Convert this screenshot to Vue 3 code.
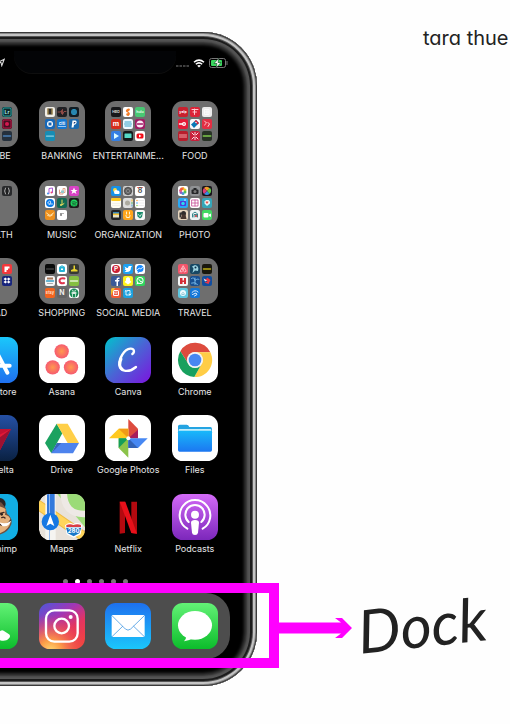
<script setup>
const c = (x, y, r, f) => `<circle cx="${x}" cy="${y}" r="${r}" fill="${f}"/>`
const p = (d, f) => `<path d="${d}" fill="${f}"/>`
const s = (d, col, w = 2) => `<path d="${d}" stroke="${col}" stroke-width="${w}" fill="none" stroke-linecap="round" stroke-linejoin="round"/>`
const r = (x, y, w, h, f, rx = 0) => `<rect x="${x}" y="${y}" width="${w}" height="${h}" rx="${rx}" fill="${f}"/>`
const t = (text, size, f) => `<text x="10" y="${10 + size * 0.35}" font-size="${size}" fill="${f}" text-anchor="middle" font-family="Inter, sans-serif" font-weight="700">${text}</text>`
const m = (bg, art = '') => r(0, 0, 20, 20, bg, 4) + art
const none = m('none')

const folders = [
  { name: 'ADOBE', minis: [
    none, none, m('#12343c', r(1, 1, 18, 18, '#27a5a0', 4) + r(3, 3, 14, 14, '#10292d', 1) + t('Lr', 10, '#a5eee9')),
    none, none, m('#541022', r(1, 1, 18, 18, '#b71848', 4) + r(3, 3, 14, 14, '#470d20', 1) + c(10, 10, 4, '#d5184f')),
    none, none, m('#25303c', s('M3 10H17', '#4a7fb5', 3))
  ] },
  { name: 'BANKING', minis: [
    m('#f1eee7', r(5, 3, 10, 12, '#33302d') + r(5, 3, 2, 12, '#c6a355') + r(13, 3, 2, 12, '#c6a355')),
    m('#202024', s('M2 10H7L9 7V13M11 5V15L14 9H18', '#b25750', 1.5)),
    m('#101b22', c(10, 10, 6, '#2e9cca') + s('M5 8H15M5 12H15', '#14445e', 1)),
    m('#1768b7', c(10, 10, 6, '#fff') + r(7, 7, 6, 6, '#1768b7')),
    m('#1477cf', t('citi', 8, '#fff') + s('M3 15H17', '#cfe6ff', 1.5)),
    m('#1b69ad', p('M7 3H13Q17 5 14 10L10 12L9 17H5Z', '#fff') + p('M10 6H13Q13 10 9 9Z', '#1c3c78')),
    m('#178db4', s('M3 10H17', '#8fd0e0', 2.5)), none, none
  ] },
  { name: 'ENTERTAINME...', minis: [
    m('#17181a', t('HBO', 7, '#ddd')), m('#fff', p('M7 5Q13 1 14 6L10 9Q17 13 11 18Q5 17 7 13L11 12Q3 9 7 5Z', '#f47a23')), m('#48c773', t('hulu', 7, '#e8ffe9')),
    m('#d52d1c', t('m', 14, '#fff')), m('#eef9ff', s('M4 6H16M3 10H17M4 14H16', '#36a2c7')), m('#a21b66', c(10, 10, 7, '#f9e9f4') + s('M5 10H15', '#a21b66', 3)),
    m('#347fe3', p('M6 4L16 10L6 16Z', '#dcfcff')), m('#15191b', r(3, 5, 14, 9, '#55d9c7', 1)), m('#fff', r(3, 5, 14, 10, '#f20c17', 3) + p('M8 7L13 10L8 13Z', '#fff'))
  ] },
  { name: 'FOOD', minis: [
    m('#c8202e', t('yelp', 7, '#fff')), m('#db2438', s('M4 5H16M6 10H13M9 4V15', '#ffc7cf')), m('#ececec', s('M6 5H14V15H6ZM6 10H14M10 5V15', '#fafafa')),
    m('#e51937', s('M3 10H11', '#fff', 3) + c(12, 10, 4, '#fff') + c(12, 10, 1.5, '#e51937')), m('#f8f8f8', p('M2 11L12 2L18 8L8 18Z', '#0878b5') + p('M9 5L12 2L18 8L15 11Z', '#d91e35') + c(12, 7, 1.5, '#fff')), m('#e42e43', s('M5 4L9 8L5 12M12 7L15 10L12 15', '#ffd4d9')),
    m('#b81f2d', s('M3 8H17M3 12H17', '#f4a3a8')), m('#c9203b', s('M4 4L16 16M16 4L4 16M10 3V17', '#ffe0e6') + c(10, 10, 2, '#c9203b')), m('#273225', s('M3 10H17', '#69a342', 4))
  ] },
  { name: 'HEALTH', minis: [none, none, m('#28292b', s('M7 4Q3 10 7 16M13 4Q17 10 13 16', '#aaa', 2) + s('M9 5V15H11V5Z', '#171717', 1)), none, none, none, none, none, none] },
  { name: 'MUSIC', minis: [
    m('#fff', s('M8 15V5L15 4V13', '#ad5bd6', 2) + c(6, 15, 2, '#3e91e8') + c(13, 13, 2, '#f04773')), m('#fff', s('M5 8V16H12V5H16V13H7', '#e3a188') + r(8, 9, 6, 5, '#91cbd0')), m('#d943c6', p('M10 3L12 8H17L13 11L15 16L10 13L5 16L7 11L3 8H8Z', '#fff')),
    m('#fff', c(10, 10, 8, '#087aea') + s('M6 9C8 4 13 6 11 10S7 14 6 10M9 12H15', '#fff', 1.5)), m('#116953', s('M10 4V14L14 11', '#eadc55', 2) + c(8, 14, 2, '#f1df64')), m('#191b1a', c(10, 10, 7, '#1ed760') + s('M6 8Q11 6 15 9M7 11Q11 9 14 12M7 14Q10 12 13 14', '#17331f', 1.3)),
    m('#ed901e', s('M3 6L10 11L17 6M5 11Q10 15 15 10', '#ffe1a8')), m('#fff', s('M8 7V11', '#222', 2) + c(12, 7, 1, '#333')), none
  ] },
  { name: 'ORGANIZATION', minis: [
    m('#1792e8', c(8, 8, 4, '#ffd93b') + c(10, 12, 4, '#fff') + c(14, 12, 3, '#fff') + r(7, 12, 10, 4, '#fff', 2)), m('#d0d0d0', c(10, 10, 8, '#555') + c(10, 10, 5, '#999') + s('M10 2V18M2 10H18M4 4L16 16M16 4L4 16', '#444', 1)), m('#fff', s('M5 3H15', '#f44335', 1.5) + t('8', 14, '#555')),
    m('#fffdf1', r(0, 0, 20, 6, '#ffca1e', 3) + s('M3 11H17M3 15H17', '#ddd', .7)), m('#ddd', c(9, 10, 5, '#acaaa0') + r(17, 3, 2, 4, '#ffba18') + r(17, 8, 2, 4, '#5ab96b') + r(17, 13, 2, 4, '#419bd5')), m('#fff', c(4, 5, 1.3, '#ff8c16') + c(4, 10, 1.3, '#198ef0') + c(4, 15, 1.3, '#78cd35') + s('M7 5H18M7 10H18M7 15H18', '#ddd', 1)),
    m('#242426', r(4, 4, 12, 4, '#3c88b8') + r(4, 7, 12, 3, '#fcc32e') + r(4, 10, 12, 5, '#e7e1c3')), m('#ffa51b', s('M7 4V8M13 4V8M6 11L7 15H13L14 11', '#fff3cf')), m('#f8f8f8', p('M4 4H16L14 14L10 17L5 13Z', '#158969') + s('M7 9L10 13L13 8', '#fff', 1.5))
  ] },
  { name: 'PHOTO', minis: [
    m('#fff', c(10, 5, 3, '#ff9c25') + c(14, 8, 3, '#dfcf24') + c(14, 12, 3, '#55bf54') + c(10, 15, 3, '#43a1d4') + c(6, 13, 3, '#8e5fc6') + c(5, 9, 3, '#df578c') + c(7, 6, 3, '#f05b3e')), m('#909294', r(3, 7, 14, 9, '#252628', 2) + r(7, 4, 6, 4, '#252628') + c(10, 11, 3, '#777')), m('#17131a', p('M10 10L4 4Q10 -1 16 5Z', '#f19c28') + p('M10 10L16 4Q21 10 15 16Z', '#61c94d') + p('M10 10L15 16Q10 20 4 16Z', '#368ce6') + p('M10 10L4 16Q-1 10 4 4Z', '#dc3d78')),
    m('#29a9f5', r(4, 6, 12, 10, '#5535d8', 2) + c(10, 11, 3.5, '#2ad9ef') + c(14, 4, 1.5, '#fff')), m('#fff', s('M4 4H16V16H4ZM10 4V10H16M4 10H10V16', '#c34391', 1.5)), m('#35a6b9', p('M5 7L8 4H13L16 7V11L10 16L5 11Z', '#e8f6f7') + p('M10 12L7 8Q9 5 10 8Q12 5 13 8Z', '#ec4d46')),
    m('#e5d4bc', c(11, 7, 5, '#302c2b') + p('M5 18L8 9H15L17 18Z', '#47362e') + r(3, 5, 3, 10, '#343332')), m('#eef4f6', s('M5 14V8Q10 1 15 8V14M8 14V9H13', '#35858c') + c(12, 12, 2.5, '#c65c62')), m('#42d963', r(3, 6, 10, 9, '#fff', 2) + p('M14 9L18 7V14L14 12Z', '#fff'))
  ] },
  { name: 'READ', minis: [none, none, m('#f2383c', p('M5 5H15V9H12V12H9V16H5Z', '#fff')), none, none, m('#18257c', p('M3 6L7 3L10 6L13 3L17 6L13 9L17 12L13 15L10 12L7 15L3 12L7 9Z', '#fff') + p('M10 6L13 9L10 12L7 9Z', '#18257c')), none, none, none] },
  { name: 'SHOPPING', minis: [
    m('#090a0a', s('M3 10H17', '#777', 1.5)), m('#fff', r(4, 5, 12, 11, '#26b4d6', 2) + s('M7 8V5Q10 2 13 5V8', '#26b4d6') + r(8, 9, 4, 3, '#fff')), m('#373932', p('M9 3H12V10L17 12V15H4V12L9 10Z', '#ead52d')),
    m('#f5f5f5', r(4, 3, 12, 4, '#aa785a') + s('M3 10H17', '#369fc6', 3) + s('M5 15H15', '#aaa')), m('#fff', s('M15 5Q5 3 5 10Q6 16 14 14', '#df344c', 4)), m('#85bf41', s('M3 10H17', '#e3f4cf', 3)),
    m('#f2641f', t('Etsy', 8, '#ffd9c2')), m('#646464', t('N', 14, '#eee')), m('#fff', c(10, 10, 9, '#188b55') + s('M6 4L10 7L14 4M5 10H15M7 8V17M13 8V17', '#eaf7ef', 1.5) + c(10, 10, 2, '#fff'))
  ] },
  { name: 'SOCIAL MEDIA', minis: [
    m('#fff', c(10, 10, 8, '#cb2134') + t('P', 13, '#fff')), m('#1da1f2', p('M3 5Q7 8 10 8Q10 3 14 4L18 4L16 7Q16 16 7 16H3L7 13L3 11L5 10Z', '#fff')), m('#fff', c(10, 9, 7, '#178aff') + p('M6 14L5 19L10 15Z', '#178aff') + s('M5 11L9 8L11 10L15 7', '#fff', 1.8)),
    m('#395998', p('M11 20V11H8V8H11V6Q11 2 17 3V6H14V8H17L16 11H14V20Z', '#fff')), m('#fff21b', p('M6 5Q10 0 14 5V9L17 12L14 14L10 17L6 14L3 12L6 9Z', '#fff')), m('#31d45c', c(10, 9, 7, '#fff') + p('M4 12L3 17L8 15Z', '#fff') + c(10, 9, 5, '#31d45c') + s('M8 7L12 12L13 11', '#fff', 2)),
    m('#f25934', p('M0 4Q0 0 4 0H8L0 15Z', '#f7bc30') + r(4, 4, 12, 12, '#fff', 3) + r(6, 6, 8, 8, '#ee5b48', 1) + s('M8 8H12V11H8Z', '#fff', 1)), m('#1ca1df', s('M6 5V14H13M4 7L6 5L8 7M9 5H14V14M12 12L14 14L16 12', '#fff', 1.7)), none
  ] },
  { name: 'TRAVEL', minis: [
    m('#f3556a', s('M10 4L4 15Q7 18 10 13Q13 18 16 15ZM10 12Q6 8 10 8T10 12', '#ffe2e4', 1.4)), m('#164763', p('M4 5L10 2Q19 4 16 14L10 13L5 18L7 9Z', '#9bd2df') + c(11, 7, 2, '#092c47')), m('#18170d', s('M3 10H17', '#bdae16', 3)),
    m('#f4f4f4', p('M4 4H9V9H12V4H16V16H12V12H9V16H4Z', '#d52c35')), m('#174f91', s('M3 5Q9 1 10 9Q17 4 18 7M3 14Q9 11 15 17M10 4V17', '#73b4e5')), m('#114e9f', p('M3 4Q9 9 10 3L17 8L13 16L5 13L11 11Z', '#eb3944') + p('M3 5L10 9L6 11Z', '#eee')),
    m('#5ec7e0', c(10, 10, 6, '#effcff') + s('M7 11Q10 6 13 11M8 13H12', '#3d95aa', 1)), m('#1476d6', s('M4 9Q10 2 16 8M5 13L12 10L14 13L9 16', '#ddecff')), none
  ] }
]

const grad = (id, stops, dir = 'x1="0" y1="0" x2="0" y2="1"') =>
  `<defs><linearGradient id="${id}" ${dir}>${stops.map(([o, col]) => `<stop offset="${o}" stop-color="${col}"/>`).join('')}</linearGradient></defs>`
const bg = (f) => r(0, 0, 138, 138, f, 32)

const apps = [
  { name: 'App Store', art: grad('ga', [[0, '#1ac8fb'], [1, '#1f70ef']]) + bg('url(#ga)') + s('M62 22L106 107M76 26L34 105M20 86H113', '#fff', 12) },
  { name: 'Asana', art: `<defs><radialGradient id="gb"><stop offset="0" stop-color="#ff994f"/><stop offset="1" stop-color="#f65a70"/></radialGradient></defs>` + bg('#fff') + c(68, 43, 21.5, 'url(#gb)') + c(41, 91, 21.5, 'url(#gb)') + c(96, 91, 21.5, 'url(#gb)') },
  { name: 'Canva', art: grad('gc', [[0, '#00c4cc'], [0.5, '#4a64d5'], [1, '#7d13df']], 'x1="0" y1="0" x2="1" y2="1"') + bg('url(#gc)') + s('M82 51C90 45 88 34 76 35C57 37 42 64 43 83C45 106 73 107 93 90', '#fff', 7) + s('M48 66C42 79 44 91 52 97', '#fff', 9) },
  { name: 'Chrome', art: bg('#fff') + p('M25 43A51 51 0 0 1 115 46L69 46A23 23 0 0 0 49 80Z', '#dd4b3e') + p('M115 46A51 51 0 0 1 67 120L89 80A23 23 0 0 0 69 46Z', '#ffcd46') + p('M25 43L49 80A23 23 0 0 0 89 80L67 120A51 51 0 0 1 25 43Z', '#18a05e') + c(69, 69, 24, '#f4f4f4') + c(69, 69, 19, '#4887f2') },
  { name: 'Fly Delta', art: grad('gd', [[0, '#2550a5'], [1, '#0a2142']]) + bg('url(#gd)') + p('M20 42H117L76 121L62 69Z', '#e31937') + p('M117 42L62 69L20 42Z', '#c41032') + p('M117 42L76 121L84 67Z', '#9d1131') },
  { name: 'Drive', art: bg('#fff') + p('M53 26L70 55L37 115L18 84Z', '#1ba260') + p('M53 26H86L120 84H86Z', '#ffcf48') + p('M37 115H102L120 84H54Z', '#4d83ed') + p('M37 115L54 84L67 84Z', '#3865ba') },
  { name: 'Google Photos', art: bg('#fff') + p('M70 12L99 41V70H70Z', '#dd4b3e') + p('M70 70L99 44V70Z', '#a61d5d') + p('M12 70L41 41H70V70Z', '#ffc91f') + p('M41 41H70V70Z', '#f19b17') + p('M70 70V128L41 99V70Z', '#8bc34a') + p('M41 70H70L41 99Z', '#159e5a') + p('M70 70H128L99 99H70Z', '#4788f3') + p('M70 70L99 99H70Z', '#3262b6') + c(70, 70, 6, '#fff') },
  { name: 'Files', art: grad('ge', [[0, '#18b9fa'], [1, '#1c77f1']]) + bg('#fff') + p('M18 34Q18 29 23 29H44Q49 29 52 36H115Q120 36 120 42V60H18Z', '#24a4e2') + r(20, 42, 98, 8, '#c6edfb', 3) + r(18, 47, 102, 63, 'url(#ge)', 5) },
  { name: 'Mailchimp', art: bg('#12aee4') + c(83, 30, 18, '#2a2424') + c(83, 34, 9, '#66483d') + p('M25 28Q70 0 101 42L105 59Q122 71 118 91Q105 126 59 123Q22 104 25 28Z', '#70503f') + p('M53 39Q76 30 101 45L99 62Q113 64 117 80Q112 108 81 119Q58 118 47 95Q56 65 53 39Z', '#e4b27e') + s('M80 90Q102 101 116 78', '#3c2823', 4) + p('M82 85Q101 93 117 80Q109 101 91 96Z', '#fff') + s('M84 58L96 55M89 71Q94 67 99 72', '#3c2823', 4) + c(89, 61, 4, '#2b211f') },
  { name: 'Maps', art: `<defs><clipPath id="mc">${bg('#fff')}</clipPath></defs><g clip-path="url(#mc)">` + bg('#e8e2da') + p('M55 0H138V100Z', '#9bdb78') + s('M74 -4Q76 62 138 60', '#eee9e5', 20) + s('M-5 31L138 130', '#eebb44', 30) + s('M-5 31L138 130', '#ffd55c', 24) + r(19, 0, 31, 138, '#f5f4f1') + r(24, 0, 23, 76, '#3279dc') + r(30, 0, 3, 138, '#8eb8f1') + c(34, 83, 26, '#1678e3') + p('M34 62L46 96L34 89L22 96Z', '#fff') + p('M78 94Q91 83 103 90Q117 83 130 94L125 121L104 131L83 121Z', '#fff') + p('M81 101H127L121 118L104 127L86 118Z', '#1979c9') + p('M82 93Q94 88 103 93Q115 88 126 93V99H82Z', '#da3e45') + '<text x="104" y="118" text-anchor="middle" fill="#fff" font-family="Inter, sans-serif" font-size="18" font-weight="700">280</text></g>' },
  { name: 'Netflix', art: bg('#000') + p('M44 23H60V117L44 119ZM79 23H96V119L79 117Z', '#b3090f') + p('M44 23H61L96 119L79 117Z', '#e8101a') },
  { name: 'Podcasts', art: grad('gf', [[0, '#d36af7'], [1, '#7c27bb']]) + bg('url(#gf)') + s('M46 104A46 46 0 1 1 92 104', '#fff', 6) + s('M50 84A29 29 0 1 1 88 84', '#fff', 6) + c(69, 62, 12, '#fff') + p('M57 86Q57 78 69 78Q81 78 81 86L78 116Q77 123 69 123Q61 123 60 116Z', '#fff') }
]

const dock = [
  { name: 'Phone', art: grad('gg', [[0, '#63f276'], [1, '#0cbd2b']]) + bg('url(#gg)') + p('M31 31C37 22 43 24 46 30L55 44Q58 49 50 57Q61 79 79 88L86 83Q91 80 96 84L111 94Q117 99 111 106C91 128 54 97 39 74Q25 49 31 31Z', '#fff') },
  { name: 'Instagram', art: grad('gh', [[0, '#5454d8'], [0.35, '#a336b3'], [0.65, '#e53460'], [1, '#f1433e']], 'x1="0.1" y1="0" x2="0.8" y2="1"') + '<defs><radialGradient id="gi" cx="0.25" cy="1.05" r="0.8"><stop offset="0" stop-color="#ffda72"/><stop offset="0.3" stop-color="#fc9c48"/><stop offset="1" stop-color="#ed4057" stop-opacity="0"/></radialGradient></defs>' + bg('url(#gh)') + bg('url(#gi)') + '<rect x="21" y="22" width="95" height="94" rx="25" stroke="#fff" stroke-width="7" fill="none"/><circle cx="68" cy="69" r="22" stroke="#fff" stroke-width="7" fill="none"/>' + c(95, 42, 6, '#fff') },
  { name: 'Mail', art: grad('gj', [[0, '#1e70ef'], [1, '#1bc7fb']]) + bg('url(#gj)') + r(20, 36, 99, 66, '#fff', 4) + s('M21 38L61 78Q69 85 77 78L118 38M21 101L53 70M118 101L86 70', '#4c9ce3', 2.5) },
  { name: 'Messages', art: grad('gk', [[0, '#63f276'], [1, '#0cbd2b']]) + bg('url(#gk)') + '<ellipse cx="69" cy="67" rx="51" ry="43" fill="#fff"/>' + p('M43 97Q43 109 36 115Q51 114 62 106Z', '#fff') }
]
</script>

<template>
  <main class="page">
    <section class="phone" aria-label="Home screen">
      <div class="screen">
        <header class="status">
          <svg class="locate" viewBox="0 0 10 10"><path d="M1 5L9 1L6 9L5 5Z" fill="none" stroke="#ddd" stroke-width="1.3" /></svg>
          <div class="notch"></div>
          <div class="signals">
            <svg class="cell" viewBox="0 0 13 3"><path d="M0 2H2.5M3.5 2H6M7 2H9.5M10.5 2H13" stroke="#555" stroke-width="1.5" /></svg>
            <svg class="wifi" viewBox="0 0 12 9"><path d="M1 3.3Q6 -1 11 3.3M2.8 5.3Q6 2.5 9.2 5.3" fill="none" stroke="#fff" stroke-width="1.5" /><path d="M4.2 6.7Q6 5.1 7.8 6.7L6 8.6Z" fill="#fff" /></svg>
            <svg class="battery" viewBox="0 0 19 10"><rect x=".5" y=".5" width="16" height="9" rx="2" fill="none" stroke="#777" /><rect x="2" y="2" width="11" height="6" rx="1" fill="#39d65e" /><path d="M10 0L5 5.5H8L7 10L12 4.5H9Z" fill="#fff" stroke="#123c20" stroke-width=".6" /><path d="M18 3V7" stroke="#777" /></svg>
          </div>
        </header>

        <div class="apps">
          <button v-for="f in folders" :key="f.name" class="app" type="button">
            <span class="folder">
              <svg v-for="(mini, i) in f.minis" :key="i" viewBox="0 0 20 20" v-html="mini"></svg>
            </span>
            <span class="name">{{ f.name }}</span>
          </button>
          <button v-for="a in apps" :key="a.name" class="app" type="button">
            <svg class="icon" viewBox="0 0 138 138" v-html="a.art"></svg>
            <span class="name">{{ a.name }}</span>
          </button>
        </div>

        <div class="pager">
          <i v-for="n in 6" :key="n" :class="{ on: n === 2 }"></i>
        </div>

        <nav class="dock" aria-label="Dock">
          <button v-for="d in dock" :key="d.name" class="app" type="button" :aria-label="d.name">
            <svg class="icon" viewBox="0 0 138 138" v-html="d.art"></svg>
          </button>
        </nav>
      </div>
      <div class="highlight"></div>
    </section>

    <aside class="notes">
      <p class="author">tara thue</p>
      <div class="callout">
        <svg class="arrow" viewBox="0 0 73 22"><path d="M0 5.500H62L56 1H63L73 11L63 21H56L62 16.500H0Z" fill="#f0f" /></svg>
        <p class="caption">Dock</p>
      </div>
    </aside>
  </main>
</template>

<style>
body {
  margin: 0;
  background: #fefefe;
}
</style>

<style scoped>
.page {
  display: flex;
  align-items: flex-start;
  min-height: 100vh;
  box-sizing: border-box;
  padding-top: 32px;
  overflow: hidden;
  font-family: Inter, "Liberation Sans", sans-serif;
}
.phone {
  position: relative;
  flex: none;
  width: 324px;
  margin-left: -67px;
  box-sizing: border-box;
  padding: 19px 17px 27px;
  border-radius: 54px;
  background: #000;
  box-shadow:
    inset 0 0 0 1px #3a3a3a,
    inset 0 0 0 2px #8a8a8a,
    inset 0 0 0 4px #c4c4c4,
    inset 0 0 0 5px #555,
    inset 0 0 0 7px #1c1c1c,
    inset 0 0 2px 10px #555,
    inset 0 0 3px 13px #333;
}
.screen {
  display: flex;
  flex-direction: column;
  align-items: center;
}
.status {
  display: grid;
  grid-template-columns: 1fr 162px 1fr;
  align-self: stretch;
  height: 50px;
}
.notch {
  height: 22px;
  border-radius: 0 0 18px 18px;
  background: #030406;
  box-shadow: 0 1px 0 #0e0e0e;
}
.locate {
  width: 8px;
  height: 9px;
  margin: 7px 9px 0 0;
  justify-self: end;
}
.signals {
  display: flex;
  align-items: center;
  gap: 4px;
  height: 24px;
}
.cell {
  flex: none;
  width: 13px;
  height: 3px;
  margin-top: 5px;
}
.wifi {
  flex: none;
  width: 12px;
  height: 9px;
}
.battery {
  flex: none;
  width: 19px;
  height: 10px;
}
.apps {
  display: grid;
  grid-template-columns: repeat(4, 1fr);
  grid-template-rows: repeat(6, 1fr);
  width: 266px;
  height: 471px;
}
.app {
  display: flex;
  flex-direction: column;
  align-items: center;
  gap: 3px;
  min-width: 0;
  padding: 0;
  border: 0;
  background: none;
  color: #e6e6e6;
  font: inherit;
}
.icon {
  flex: none;
  display: block;
  width: 46px;
  height: 46px;
}
.folder {
  display: grid;
  grid-template-columns: repeat(3, 10px);
  grid-auto-rows: 10px;
  gap: 2px;
  box-sizing: border-box;
  width: 46px;
  height: 46px;
  padding: 6px;
  border-radius: 11px;
  background: #6e6e6e;
}
.folder svg {
  width: 10px;
  height: 10px;
}
.name {
  font-size: 9px;
  line-height: 12px;
  white-space: nowrap;
}
.pager {
  display: flex;
  gap: 7px;
  padding: 7px 0 9px;
}
.pager i {
  width: 5px;
  height: 5px;
  border-radius: 50%;
  background: #777;
}
.pager .on {
  background: #fff;
}
.dock {
  display: grid;
  grid-template-columns: repeat(4, 1fr);
  align-items: center;
  width: 270px;
  box-sizing: border-box;
  padding: 10px 2px;
  border-radius: 24px;
  background: #4d4d4d;
}
.highlight {
  position: absolute;
  right: -22px;
  bottom: 18px;
  left: 0;
  height: 65px;
  border: 10px solid #f0f;
}
.notes {
  display: flex;
  flex: 1;
  flex-direction: column;
  gap: 532px;
  min-width: 0;
  padding: 0 0 0 22px;
}
.author {
  align-self: flex-end;
  width: 87px;
  margin: -8px 0 0;
  color: #222;
  font-size: 20px;
  line-height: 28px;
  font-feature-settings: "cv11";
  white-space: nowrap;
}
.callout {
  display: flex;
  align-items: center;
  gap: 6px;
}
.arrow {
  flex: none;
  width: 73px;
  height: 22px;
}
.caption {
  margin: 0;
  padding-bottom: 8px;
  color: #222;
  font-family: Lato, "Liberation Sans", sans-serif;
  font-size: 60px;
  font-style: italic;
  line-height: 80px;
  transform: rotate(-6deg);
}
</style>
